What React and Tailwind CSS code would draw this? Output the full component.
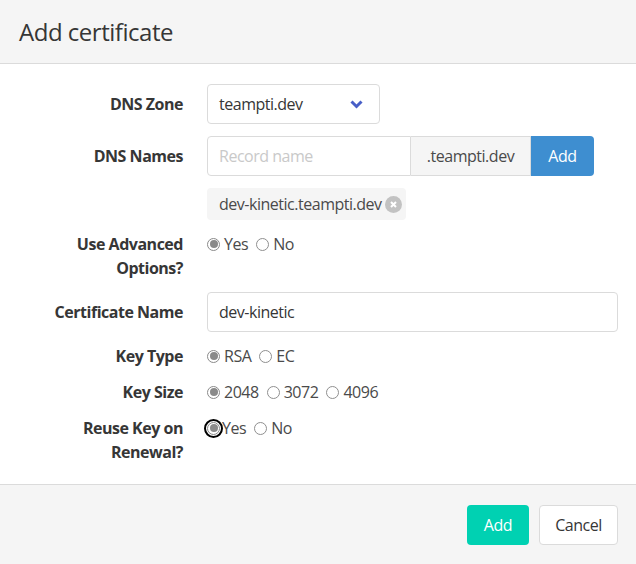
import React from 'react'

const font = { fontFamily: '"Open Sans", "Noto Sans", Arial, sans-serif' }

function Radio({ checked, focused, label, className = '' }) {
  return (
    <label className={`inline-flex items-center ${className}`}>
      <span
        className={`relative flex h-[13px] w-[13px] items-center justify-center rounded-full border bg-white ${
          checked ? 'border-[#8a8a8a]' : 'border-[#8f8f8f]'
        } ${focused ? 'outline-2 outline-offset-1 outline-black' : ''}`}
      >
        {checked && <span className="h-[8px] w-[8px] rounded-full bg-[#8a8a8a]" />}
      </span>
      <span className={focused ? 'ml-[2px]' : 'ml-[4px]'}>{label}</span>
    </label>
  )
}

function Row({ label, children, className = '' }) {
  return (
    <div className={`flex ${className}`}>
      <div className="w-[163px] shrink-0 text-right font-bold leading-6 text-[#363636]">{label}</div>
      <div className="ml-6 flex-1">{children}</div>
    </div>
  )
}

export default function App() {
  return (
    <div className="flex h-[564px] w-[636px] flex-col bg-white text-base tracking-[-0.03em] text-[#4a4a4a]" style={font}>
      <header className="flex h-[64px] shrink-0 items-center border-b border-[#dbdbdb] bg-[#f5f5f5] px-[19px]">
        <h2 className="text-2xl leading-none tracking-[-0.02em] text-[#363636]">Add certificate</h2>
      </header>

      <section className="flex flex-1 flex-col gap-3 pt-5 pr-[18px] pb-5 pl-5">
        <Row label={<div className="pt-2">DNS Zone</div>}>
          <div className="flex h-10 w-[173px] items-center justify-between rounded border border-[#dbdbdb] pl-[11px] pr-[16px] text-[#363636]">
            <span>teampti.dev</span>
            <svg width="13" height="9" viewBox="0 0 13 9">
              <path d="M1.5 1.5 L6.5 6.5 L11.5 1.5" fill="none" stroke="#485fc7" strokeWidth="3" />
            </svg>
          </div>
        </Row>

        <Row label={<div className="pt-2">DNS Names</div>}>
          <div className="flex h-10">
            <div className="flex w-[204px] items-center rounded-l border border-[#dbdbdb] pl-[11px] text-[#c9c9c9]">
              Record name
            </div>
            <div className="flex w-[120px] items-center justify-center border-y border-r border-[#dbdbdb] bg-[#f5f5f5] text-[#4a4a4a]">
              .teampti.dev
            </div>
            <button className="flex w-[63px] items-center justify-center rounded-r bg-[#3e8ed0] text-white">Add</button>
          </div>
          <div className="mt-3 flex h-8 w-fit items-center rounded bg-[#f5f5f5] pl-[12px] pr-[4px] text-[#4a4a4a]">
            <span>dev-kinetic.teampti.dev</span>
            <span className="relative ml-[3px] flex h-[17px] w-[17px] shrink-0 items-center justify-center rounded-full bg-[#c2c2c2]">
              <svg width="9" height="9" viewBox="0 0 9 9">
                <path d="M2 2 L7 7 M7 2 L2 7" stroke="white" strokeWidth="2" />
              </svg>
            </span>
          </div>
        </Row>

        <Row label={<>Use Advanced<br />Options?</>}>
          <div className="flex h-6 items-center">
            <Radio checked label="Yes" />
            <Radio label="No" className="ml-[8px]" />
          </div>
        </Row>

        <Row label={<div className="pt-2">Certificate Name</div>}>
          <div className="flex h-10 w-full items-center rounded border border-[#dbdbdb] pl-[11px] text-[#363636]">
            dev-kinetic
          </div>
        </Row>

        <Row label="Key Type">
          <div className="flex h-6 items-center">
            <Radio checked label="RSA" />
            <Radio label="EC" className="ml-[8px]" />
          </div>
        </Row>

        <Row label="Key Size">
          <div className="flex h-6 items-center">
            <Radio checked label="2048" />
            <Radio label="3072" className="ml-[8px]" />
            <Radio label="4096" className="ml-[8px]" />
          </div>
        </Row>

        <Row label={<>Reuse Key on<br />Renewal?</>}>
          <div className="flex h-6 items-center">
            <Radio checked focused label="Yes" />
            <Radio label="No" className="ml-[8px]" />
          </div>
        </Row>
      </section>

      <footer className="flex h-[80px] shrink-0 items-center justify-end gap-[10px] border-t border-[#dbdbdb] bg-[#f5f5f5] pr-[18px]">
        <button className="h-10 w-[62px] rounded bg-[#00d1b2] text-white">Add</button>
        <button className="h-10 w-[79px] rounded border border-[#dbdbdb] bg-white text-[#363636]">Cancel</button>
      </footer>
    </div>
  )
}
